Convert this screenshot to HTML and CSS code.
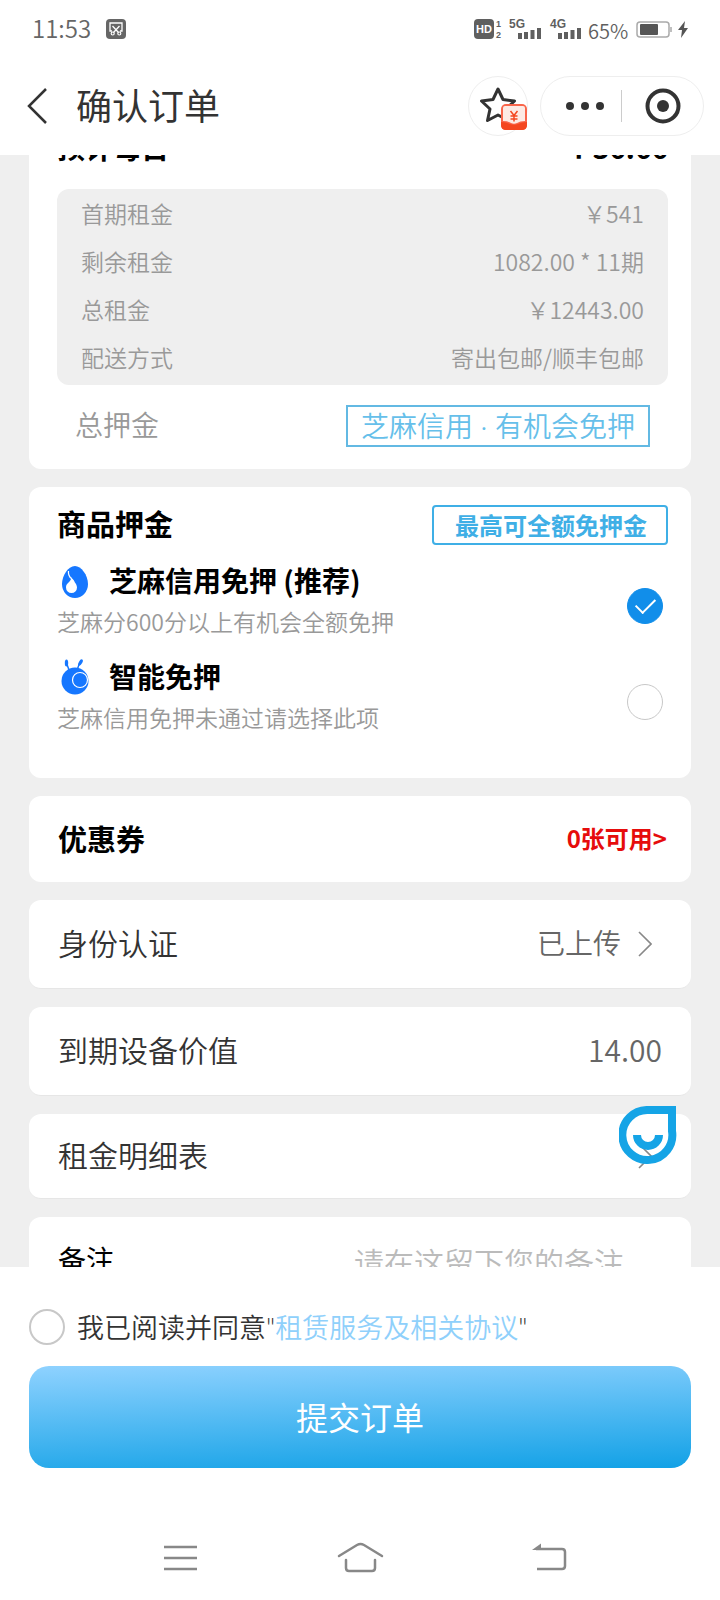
FILE: index.html
```
<!DOCTYPE html>
<html lang="zh-CN">
<head>
    <meta charset="UTF-8">
    <meta name="viewport" content="width=device-width, initial-scale=1">
    <title>确认订单</title>
    <link rel="stylesheet" href="styles.css">
</head>
<body>
    <header class="header">
        <div class="status-bar">
            <span class="time">11:53</span>
            <svg width="20" height="20" viewBox="0 0 20 20" fill="none">
                <rect width="20" height="20" rx="4" fill="#666"/>
                <path d="M6 12H4V4h12v8h-2" stroke="#fff" stroke-width="1.3"/>
                <path d="M6.5 7l6 6.5M13.5 7l-6 6.5" stroke="#fff" stroke-width="1.3"/>
                <circle cx="6.7" cy="14.5" r="1.5" stroke="#fff" stroke-width="1.2"/>
                <circle cx="13.3" cy="14.5" r="1.5" stroke="#fff" stroke-width="1.2"/>
            </svg>
            <div class="status-right">
                <svg width="158" height="22" viewBox="0 0 158 22" fill="#5f5f5f" class="signal">
                    <rect x="0" y="1" width="20" height="20" rx="4"/>
                    <text x="2" y="15" font-size="11" fill="#fff">HD</text>
                    <text x="22" y="9" font-size="9">1</text>
                    <text x="22" y="20" font-size="9">2</text>
                    <text x="35" y="10" font-size="12">5G</text>
                    <path d="M44 15h4v6h-4zM50 14h4v7h-4zM56.5 12h4v9h-4zM63 10h4v11h-4z"/>
                    <text x="76" y="10" font-size="12">4G</text>
                    <path d="M84 15h4v6h-4zM90 14h4v7h-4zM96.5 12h4v9h-4zM103 10h4v11h-4z"/>
                    <text x="114" y="21" class="percent">65%</text>
                </svg>
                <svg width="54" height="20" viewBox="0 0 54 20">
                    <rect x="1" y="3" width="32" height="15" rx="3" fill="none" stroke="#aaa" stroke-width="1.5"/>
                    <rect x="4" y="5" width="18" height="11" rx="1" fill="#555"/>
                    <path d="M35 8v5" stroke="#aaa" stroke-width="1.5"/>
                    <path d="M49 2l-7 9h4l-1 8 7-10h-4z" fill="#555"/>
                </svg>
            </div>
        </div>
        <nav class="title-bar">
            <button class="icon-btn back" aria-label="返回">
                <svg width="22" height="36" viewBox="0 0 22 36" fill="none" stroke="#333" stroke-width="2.5">
                    <path d="M19 1L2 18l17 17"/>
                </svg>
            </button>
            <h1>确认订单</h1>
            <button class="icon-btn favorite" aria-label="收藏">
                <svg width="58" height="58" viewBox="0 0 58 58">
                    <path d="M29 12l5 10.5 11.5 1.5-8.5 8 2.5 11.5-10.5-5.5-10.5 5.5L21 32l-8.5-8L24 22.5z" fill="none" stroke="#333" stroke-width="3" stroke-linejoin="round"/>
                    <rect x="32" y="27" width="26" height="26" rx="5" fill="#f9654a"/>
                    <path d="M34 31q0-2 2-2h18q2 0 2 2v13q-5 0-8 2-3 1.500-6 0-3-2-8-2z" fill="#fdeae4"/>
                    <path d="M32 45q5 0 9 2 4 1.500 8 0 4-2 9-2v3q0 5-5 5H37q-5 0-5-5z" fill="#f4461f"/>
                    <path d="M41.500 34l3.500 4.500 3.500-4.500M45 38v6.500M41.500 39h7M41.500 42h7" fill="none" stroke="#f4461f" stroke-width="1.5"/>
                </svg>
            </button>
            <div class="capsule">
                <button class="icon-btn more" aria-label="更多">
                    <svg width="40" height="10" viewBox="0 0 40 10" fill="#333">
                        <circle cx="5" cy="5" r="4"/><circle cx="20" cy="5" r="4"/><circle cx="35" cy="5" r="4"/>
                    </svg>
                </button>
                <span class="divider"></span>
                <button class="icon-btn close" aria-label="关闭">
                    <svg width="36" height="36" viewBox="0 0 36 36">
                        <circle cx="18" cy="18" r="15.5" fill="none" stroke="#333" stroke-width="4"/>
                        <circle cx="18" cy="18" r="6" fill="#333"/>
                    </svg>
                </button>
            </div>
        </nav>
    </header>

    <main class="content">
        <section class="card summary">
            <div class="daily">
                <span>预计每日</span>
                <span>￥36.66</span>
            </div>
            <dl class="fees">
                <div><dt>首期租金</dt><dd>￥541</dd></div>
                <div><dt>剩余租金</dt><dd>1082.00 * 11期</dd></div>
                <div><dt>总租金</dt><dd>￥12443.00</dd></div>
                <div><dt>配送方式</dt><dd>寄出包邮/顺丰包邮</dd></div>
            </dl>
            <div class="total">
                <span>总押金</span>
                <span class="credit-tag">芝麻信用<span class="latin"> · </span>有机会免押</span>
            </div>
        </section>

        <section class="card deposit">
            <div class="deposit-head">
                <h2>商品押金</h2>
                <span class="deposit-tag">最高可全额免押金</span>
            </div>
            <label class="option">
                <span class="option-text">
                    <span class="option-title">
                        <svg width="36" height="36" viewBox="0 0 36 36">
                            <path d="M18 4c6 0 13 9 13 18a13 14 0 0 1-26 0C5 14 11 4 18 4z" fill="#1677ff"/>
                            <path d="M11.5 9c-1 7 4 7 5.500 11" fill="none" stroke="#fff" stroke-width="1.2"/>
                            <path d="M14.500 15c1 4 5.500 6 5.500 10.500a5.500 5.500 0 0 1-11 0c0-5 5-5 5.500-10.500z" fill="#fff"/>
                        </svg>
                        芝麻信用免押 (推荐)
                    </span>
                    <span class="option-desc">芝麻分600分以上有机会全额免押</span>
                </span>
                <input type="radio" name="deposit" class="round" checked>
            </label>
            <label class="option">
                <span class="option-text">
                    <span class="option-title">
                        <svg width="36" height="36" viewBox="0 0 36 36" class="bug">
                            <circle cx="18" cy="23" r="13.5" fill="#1677ff"/>
                            <path d="M12 12L9.500 5M20.500 11q1-5 4-8" fill="none" stroke="#1677ff" stroke-width="1.5"/>
                            <ellipse cx="9.5" cy="5" rx="1.7" ry="3.5" fill="#1677ff"/>
                            <ellipse cx="23.5" cy="4.5" rx="1.7" ry="3.5" transform="rotate(30 23.5 4.5)" fill="#1677ff"/>
                            <circle cx="23" cy="22" r="7.5" fill="none" stroke="#fff" stroke-width="1.2"/>
                        </svg>
                        智能免押
                    </span>
                    <span class="option-desc">芝麻信用免押未通过请选择此项</span>
                </span>
                <input type="radio" name="deposit" class="round">
            </label>
        </section>

        <section class="card coupon">
            <h2>优惠券</h2>
            <a href="#">0张可用&gt;</a>
        </section>

        <section class="card row">
            <span class="name">身份认证</span>
            <a href="#" class="row-link"><span class="value">已上传</span>
                <svg width="14" height="26" viewBox="0 0 14 26" fill="none" stroke="#888" stroke-width="1.6"><path d="M1 1l12 12L1 25"/></svg>
            </a>
        </section>

        <section class="card row">
            <span class="name">到期设备价值</span>
            <span class="value">14.00</span>
        </section>

        <section class="card row detail">
            <span class="name">租金明细表</span>
            <a href="#" class="row-link" aria-label="查看租金明细">
                <svg width="14" height="26" viewBox="0 0 14 26" fill="none" stroke="#888" stroke-width="1.6"><path d="M1 1l12 12L1 25"/></svg>
            </a>
            <button class="icon-btn service" aria-label="客服">
                <svg width="58" height="58" viewBox="0 0 58 58" fill="none" stroke="#15a4e6" stroke-width="8">
                    <path d="M29 4h24v21a25 25 0 1 1-24-21z"/>
                    <path d="M18 29a11 11 0 0 0 22 0"/>
                </svg>
            </button>
        </section>

        <section class="card row remark">
            <label for="remark" class="name">备注</label>
            <input type="text" id="remark" placeholder="请在这留下您的备注">
        </section>
    </main>

    <footer class="footer">
        <div class="agree">
            <input type="checkbox" id="agree" class="round">
            <label for="agree">我已阅读并同意<span class="latin">"</span><a href="#">租赁服务及相关协议</a><span class="latin">"</span></label>
        </div>
        <button class="submit">提交订单</button>
        <nav class="system-nav">
            <button class="icon-btn" aria-label="菜单">
                <svg width="60" height="40" viewBox="0 0 60 40" fill="none" stroke="#888" stroke-width="2.5"><path d="M14 8h33M14 19h33M14 30h33"/></svg>
            </button>
            <button class="icon-btn" aria-label="主页">
                <svg width="60" height="40" viewBox="0 0 60 40" fill="none" stroke="#888" stroke-width="2.5" stroke-linecap="round">
                    <path d="M9 17L27 6q3.500-2 7 0L52 17"/>
                    <path d="M16 21v8q0 3 3 3h23q3 0 3-3v-8"/>
                </svg>
            </button>
            <button class="icon-btn" aria-label="返回上一页">
                <svg width="60" height="40" viewBox="0 0 60 40" fill="none" stroke="#888" stroke-width="2.5">
                    <path d="M26 10h26q3 0 3 3v14q0 3-3 3H27"/>
                    <path d="M22 11l9-6.500V11z" fill="#888" stroke="none"/>
                </svg>
            </button>
        </nav>
    </footer>
</body>
</html>
```
FILE: styles.css
```
* {
    box-sizing: border-box;
}

body {
    margin: 0;
    height: 100vh;
    display: flex;
    flex-direction: column;
    font-family: "Noto Sans CJK SC", sans-serif;
    font-weight: 350;
    color: #333;
    background-color: #fff;
}

h1,
h2,
dl,
dd {
    margin: 0;
}

a {
    text-decoration: none;
}

svg {
    display: block;
    flex-shrink: 0;
}

.latin {
    font-family: Lato, sans-serif;
    line-height: 1;
}

.icon-btn {
    display: flex;
    align-items: center;
    justify-content: center;
    padding: 0;
    border: none;
    background: none;
    cursor: pointer;
}

/* Header */
.status-bar {
    display: flex;
    align-items: center;
    height: 57px;
    padding: 0 30px 0 32px;
    gap: 15px;
    color: #666;
}

.time {
    padding-bottom: 2px;
    font-size: 24px;
}

.status-right {
    display: flex;
    align-items: center;
    gap: 4px;
    margin-left: auto;
}

.signal {
    overflow: visible;
}

.signal text {
    font-family: "Liberation Sans", sans-serif;
    font-weight: 700;
}

.signal .percent {
    font-family: "Noto Sans CJK SC", sans-serif;
    font-size: 20px;
    font-weight: 350;
}

.title-bar {
    display: flex;
    align-items: center;
    height: 98px;
    padding: 0 16px 0 27px;
}

.title-bar h1 {
    flex: 1;
    margin-left: 27px;
    padding-bottom: 4px;
    font-size: 36px;
    font-weight: 400;
}

.favorite {
    width: 60px;
    height: 60px;
    margin-right: 12px;
    border: 1px solid #eee;
    border-radius: 50%;
}

.capsule {
    display: flex;
    align-items: center;
    width: 164px;
    height: 60px;
    border: 1px solid #eee;
    border-radius: 30px;
}

.capsule .more {
    width: 80px;
    padding-left: 8px;
}

.capsule .close {
    flex: 1;
}

.capsule .divider {
    width: 1px;
    height: 32px;
    background-color: #ccc;
}

/* Cards */
.content {
    flex: 1;
    min-height: 0;
    overflow: hidden;
    display: flex;
    flex-direction: column;
    gap: 18px;
    padding: 0 29px;
    background-color: #efefef;
}

.card {
    flex-shrink: 0;
    border-radius: 12px;
    background-color: #fff;
}

.card h2 {
    font-size: 29px;
    font-weight: 700;
    line-height: 36px;
    color: #000;
}

.summary {
    margin-top: -40px;
    padding: 12px 23px 22px 28px;
}

.daily {
    display: flex;
    justify-content: space-between;
    margin-bottom: 22px;
    font-size: 28px;
    font-weight: 700;
    line-height: 40px;
    color: #000;
}

.fees {
    padding: 0 24px 4px;
    border-radius: 12px;
    background-color: #efefef;
    font-size: 23px;
    line-height: 48px;
    color: #999;
}

.fees div {
    display: flex;
    justify-content: space-between;
}

.total {
    display: flex;
    align-items: flex-start;
    justify-content: space-between;
    margin-top: 20px;
    padding: 0 18px;
    font-size: 28px;
    line-height: 38px;
    color: #999;
}

.credit-tag {
    padding: 0 13px 2px;
    border: 2px solid #63b9e3;
    line-height: 36px;
    white-space: pre;
    color: #66bfea;
}

.deposit {
    padding: 18px 23px 28px 28px;
}

.deposit-head {
    display: flex;
    align-items: flex-start;
    justify-content: space-between;
    margin-bottom: 13px;
}

.deposit-tag {
    padding: 0 19px 0 21px;
    border: 2px solid #3fafe6;
    border-radius: 4px;
    font-size: 24px;
    font-weight: 700;
    line-height: 36px;
    color: #3fafe6;
}

.option {
    display: flex;
    align-items: center;
    justify-content: space-between;
    min-height: 96px;
    padding-right: 5px;
}

.option-text {
    align-self: flex-start;
}

.option-title {
    display: flex;
    align-items: center;
    gap: 16px;
    font-size: 28px;
    font-weight: 700;
    line-height: 44px;
    color: #000;
}

.option-desc {
    display: block;
    font-size: 23px;
    line-height: 38px;
    color: #999;
}

.bug {
    overflow: visible;
}

.round {
    appearance: none;
    display: flex;
    align-items: center;
    justify-content: center;
    width: 36px;
    height: 36px;
    margin: 0;
    border: 1px solid #c8c8c8;
    border-radius: 50%;
    background-color: #fff;
}

.round:checked {
    border-color: #118eea;
    background-color: #118eea;
}

.round:checked::after {
    content: "";
    width: 17px;
    height: 9px;
    margin-bottom: 5px;
    border-left: 2px solid #fff;
    border-bottom: 2px solid #fff;
    transform: rotate(-45deg);
}

.coupon {
    display: flex;
    align-items: center;
    justify-content: space-between;
    min-height: 86px;
    padding: 0 24px 3px 29px;
}

.coupon a {
    font-size: 24px;
    font-weight: 700;
    color: #e60c0c;
}

.row {
    display: flex;
    align-items: center;
    justify-content: space-between;
    min-height: 89px;
    padding: 0 29px;
    border-bottom: 1px solid #e6e6e6;
    font-size: 30px;
}

.row .name,
.row .value {
    padding-bottom: 4px;
}

.row-link {
    display: flex;
    align-items: center;
    gap: 17px;
    padding-right: 10px;
    font-size: 28px;
}

.value {
    color: #666;
}

.detail {
    position: relative;
    min-height: 85px;
}

/* Customer service bubble floats over the row */
.service {
    position: absolute;
    top: -8px;
    right: 14px;
}

.remark label {
    font-size: 28px;
    font-weight: 400;
    color: #000;
}

.remark input {
    width: 51%;
    padding: 0;
    border: none;
    outline: none;
    font: inherit;
    color: #333;
}

.remark input::placeholder {
    color: #bbb;
}

/* Footer */
.footer {
    padding: 40px 29px 0;
    background-color: #fff;
}

.agree {
    display: flex;
    align-items: center;
    gap: 12px;
    margin-bottom: 19px;
    font-size: 27px;
    line-height: 40px;
}

.agree .round {
    border-width: 2px;
}

.agree a {
    color: #8fd0fb;
}

.submit {
    display: block;
    width: 100%;
    height: 102px;
    padding-bottom: 4px;
    border: none;
    border-radius: 20px;
    background: linear-gradient(178deg, #8fd2ff, #12a1e6);
    font-family: inherit;
    font-size: 32px;
    color: #fff;
    cursor: pointer;
}

.system-nav {
    display: grid;
    grid-template-columns: repeat(3, 1fr);
    height: 132px;
    padding: 50px 61px 0;
}
```
